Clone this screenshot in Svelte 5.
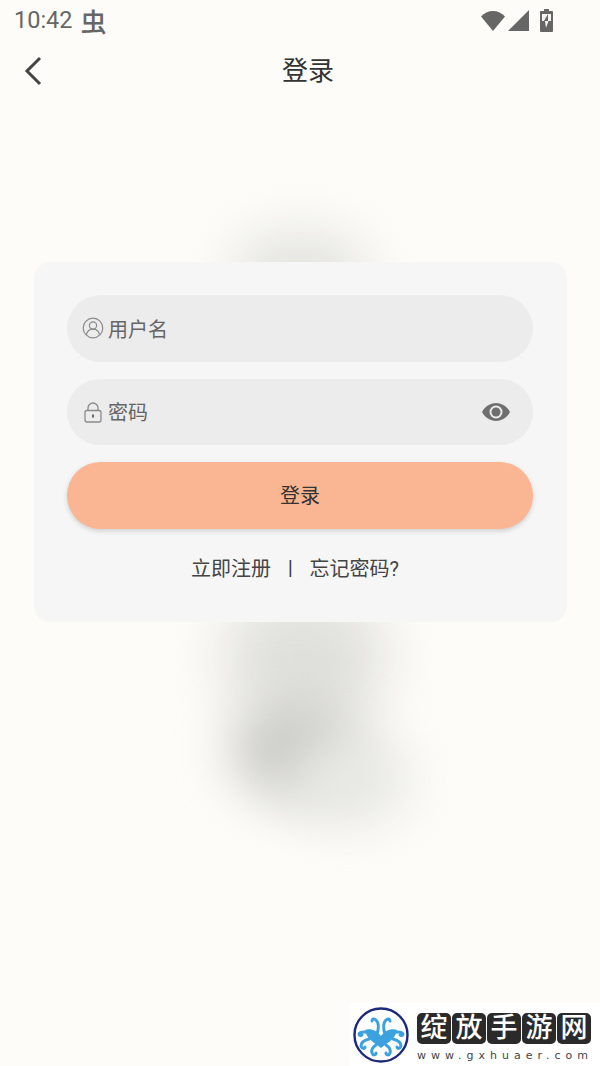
<script>
  let showPassword = $state(false);
  const brandChars = ['绽', '放', '手', '游', '网'];
</script>

<div class="page">
  <div class="blob blob-top"></div>
  <div class="blob blob-mid"></div>
  <div class="blob blob-low"></div>
  <div class="blob blob-side"></div>

  <header class="status">
    <span class="time">10:42</span>
    <span class="bug">虫</span>
    <span class="status-icons">
      <svg width="24" height="21" viewBox="0 0 24 21"><path d="M0 6.500C3 3 7.500 1 12 1s9 2 12 5.500L12 21z" fill="#666"/></svg>
      <svg width="21" height="21" viewBox="0 0 21 21"><path d="M21 0v21H0z" fill="#666"/></svg>
      <svg width="13" height="23" viewBox="0 0 13 23">
        <path d="M4 0h5v2h3a1 1 0 0 1 1 1v19a1 1 0 0 1-1 1H1a1 1 0 0 1-1-1V3a1 1 0 0 1 1-1h3z" fill="#666"/>
        <path d="M2 5h9v7H2z" fill="#f4f4f0"/>
        <path d="M8 5 4 12h4z" fill="#666"/>
        <path d="M5 12h3.500L6 19z" fill="#f4f4f0"/>
      </svg>
    </span>
  </header>

  <nav class="nav">
    <svg class="back" width="18" height="30" viewBox="0 0 18 30"><path d="M16 2 3 15l13 13" fill="none" stroke="#444" stroke-width="3"/></svg>
    <h1>登录</h1>
  </nav>

  <main class="card">
    <div class="field">
      <svg width="22" height="22" viewBox="0 0 22 22" fill="none" stroke="#8a8a8a" stroke-width="1.200">
        <circle cx="11" cy="11" r="9.800"/>
        <circle cx="11" cy="8.500" r="3.600"/>
        <path d="M4.500 17.500c.8-3.500 3.300-5.400 6.500-5.400s5.700 1.900 6.500 5.400"/>
      </svg>
      <span class="placeholder">用户名</span>
    </div>

    <div class="field">
      <svg width="22" height="22" viewBox="0 0 22 22" fill="none" stroke="#8a8a8a" stroke-width="1.300">
        <rect x="3" y="9.500" width="16" height="11.500" rx="2"/>
        <path d="M6 9.500V7a5 5 0 0 1 10 0v2.500"/>
        <rect x="10" y="13.500" width="2" height="3" fill="#666" stroke="none"/>
      </svg>
      <span class="placeholder">密码</span>
      <button class="eye" aria-label="显示密码" onclick={() => (showPassword = !showPassword)}>
        <svg width="28" height="18" viewBox="0 0 28 18">
          <path d="M0 9C3 3.500 8 0 14 0s11 3.500 14 9c-3 5.500-8 9-14 9S3 14.500 0 9z" fill="#6f6f6f"/>
          <circle cx="14" cy="9" r="6.500" fill="#ececec"/>
          <circle cx="14" cy="9" r="4.500" fill="#6f6f6f"/>
        </svg>
      </button>
    </div>

    <button class="submit">登录</button>

    <div class="links">
      <span>立即注册</span>
      <span class="sep">|</span>
      <span>忘记密码?</span>
    </div>
  </main>

  <aside class="watermark">
    <svg width="56" height="56" viewBox="0 0 56 56">
      <circle cx="28" cy="28" r="26.500" fill="#fff" stroke="#1d2a78" stroke-width="2.400"/>
      <path d="M28 29C24 24 18 21 12 23c1 8 8 12 16 18 8-6 15-10 16-18-6-2-12 1-16 6z" fill="#3ba2df"/>
      <g fill="none" stroke="#3ba2df" stroke-width="3" stroke-linecap="round">
        <path d="M24 27c2-6 2-11-1-14-2-2-4-1-4 1"/>
        <path d="M32 27c-2-6-2-11 1-14 2-2 4-1 4 1"/>
        <path d="M15 25c-4 0-8-1-9 2 0 2 2 2 3 1"/>
        <path d="M41 25c4 0 8-1 9 2 0 2-2 2-3 1"/>
        <path d="M16 32c-4 1-8 3-8 7 1 3 4 3 4 1"/>
        <path d="M40 32c4 1 8 3 8 7-1 3-4 3-4 1"/>
        <path d="M23 38c-3 2-5 5-4 8 1 3 4 2 4 0"/>
        <path d="M33 38c3 2 5 5 4 8-1 3-4 2-4 0"/>
      </g>
    </svg>
    <div class="brand">
      <div class="brand-chars">
        {#each brandChars as c}
          <span>{c}</span>
        {/each}
      </div>
      <div class="url">www.gxhuaer.com</div>
    </div>
  </aside>
</div>

<style>
  :global(body) {
    margin: 0;
  }

  .page {
    position: relative;
    width: 600px;
    height: 1066px;
    overflow: hidden;
    background: #fdfcf8;
    font-family: "Roboto", "Noto Sans CJK SC", sans-serif;
    color: #333;
  }

  .blob {
    position: absolute;
    border-radius: 50%;
  }

  .blob-top {
    left: 232px;
    top: 232px;
    width: 136px;
    height: 80px;
    background: #e2e2de;
    filter: blur(26px);
  }

  .blob-mid {
    left: 222px;
    top: 585px;
    width: 165px;
    height: 140px;
    background: #e0e0dc;
    filter: blur(28px);
  }

  .blob-low {
    left: 232px;
    top: 700px;
    width: 130px;
    height: 100px;
    background: #c9c9c5;
    filter: blur(26px);
  }

  .blob-side {
    left: 290px;
    top: 735px;
    width: 120px;
    height: 90px;
    background: #e8e8e4;
    filter: blur(26px);
  }

  .status {
    position: relative;
    display: flex;
    align-items: center;
    height: 40px;
    padding: 0 47px 0 14px;
    color: #666;
  }

  .time {
    font-size: 23.500px;
  }

  .bug {
    margin-left: 8px;
    font-size: 26px;
    font-weight: 500;
  }

  .status-icons {
    display: flex;
    align-items: center;
    gap: 3px;
    margin-left: auto;
  }

  .status-icons svg:last-child {
    margin-left: 8px;
  }

  .nav {
    position: relative;
    display: flex;
    justify-content: center;
    align-items: center;
    height: 56px;
    padding-left: 16px;
    padding-bottom: 4px;
  }

  .back {
    position: absolute;
    left: 24px;
    top: 16px;
  }

  h1 {
    margin: 0;
    font-size: 26px;
    font-weight: 400;
    color: #333;
  }

  .card {
    position: relative;
    display: flex;
    flex-direction: column;
    gap: 17px;
    box-sizing: border-box;
    width: 533px;
    height: 360px;
    margin: 162px 0 0 34px;
    padding: 33px 34px 0 33px;
    border-radius: 16px;
    background: #f6f6f7;
  }

  .field {
    display: flex;
    align-items: center;
    gap: 4px;
    height: 66.500px;
    padding: 0 23px 0 15px;
    border-radius: 34px;
    background: #ececec;
  }

  .placeholder {
    font-size: 20px;
    color: #666;
  }

  .eye {
    display: flex;
    margin-left: auto;
    padding: 0;
    border: 0;
    background: none;
  }

  .submit {
    height: 66.500px;
    padding-bottom: 2px;
    border: 0;
    border-radius: 34px;
    background: #fab592;
    box-shadow: 0 2px 5px rgba(0, 0, 0, 0.16);
    color: #333;
    font-family: inherit;
    font-size: 20px;
  }

  .links {
    display: flex;
    justify-content: center;
    align-items: center;
    gap: 17px;
    margin-top: 7px;
    padding-right: 10px;
    font-size: 20px;
    color: #444;
  }

  .sep {
    font-family: "Liberation Sans", sans-serif;
    font-size: 18px;
    color: #333;
  }

  .watermark {
    position: absolute;
    left: 350px;
    top: 1003px;
    display: flex;
    align-items: center;
    gap: 8px;
    width: 250px;
    height: 63px;
    padding-left: 3px;
    box-sizing: border-box;
    background: #fff;
  }

  .brand {
    padding-top: 6px;
  }

  .brand-chars {
    display: flex;
    gap: 1px;
  }

  .brand-chars span {
    display: flex;
    justify-content: center;
    align-items: center;
    width: 34px;
    height: 31px;
    border-radius: 5px;
    background: #2a2a2a;
    color: #fff;
    font-size: 27px;
    font-weight: 500;
    line-height: 1;
  }

  .url {
    margin-top: 5px;
    font-family: "DejaVu Sans", sans-serif;
    font-size: 11px;
    line-height: 13px;
    letter-spacing: 5px;
    color: #444;
    white-space: nowrap;
  }
</style>
